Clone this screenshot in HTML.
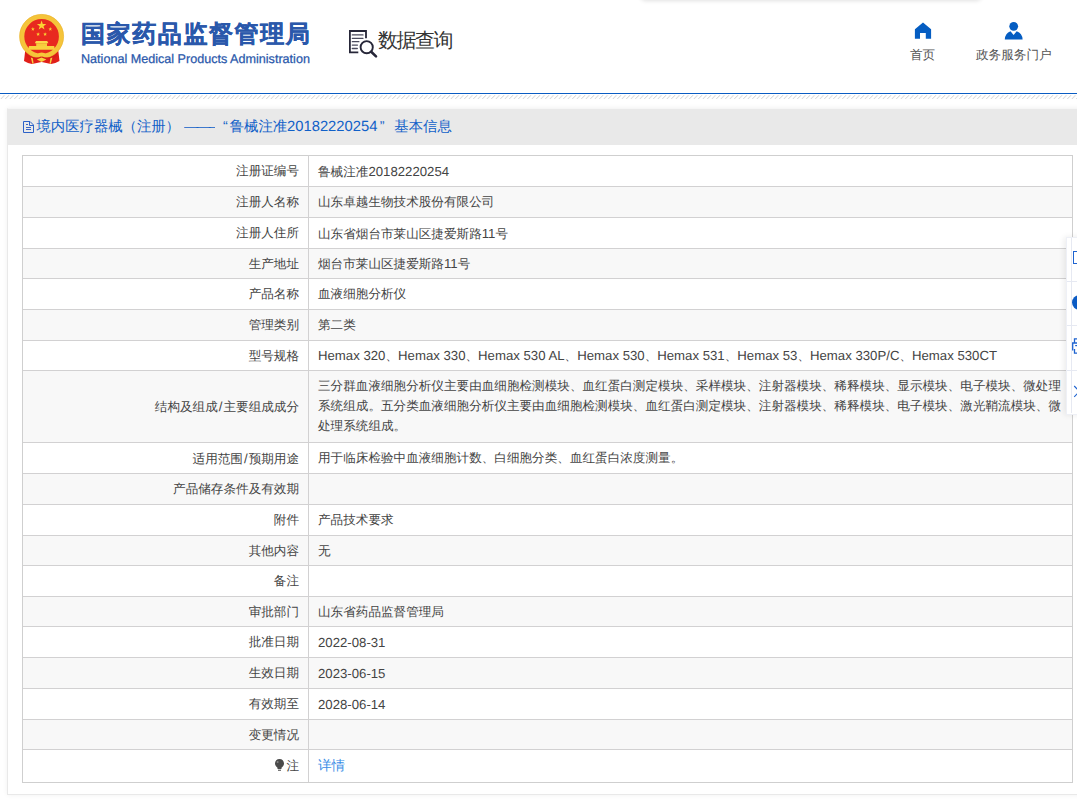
<!DOCTYPE html>
<html><head><meta charset="utf-8">
<style>
*{margin:0;padding:0;box-sizing:border-box}
html,body{width:1077px;height:801px;overflow:hidden;background:#fff}
body{position:relative;font-family:"Liberation Sans",sans-serif;color:#444;text-rendering:geometricPrecision}
.la{font-size:13.2px}
.abs{position:absolute}
.lbl{position:absolute;left:22px;width:277px;text-align:right;font-size:12.6px;white-space:nowrap;color:#444}
.val{position:absolute;left:318px;font-size:12.6px;white-space:nowrap;color:#444}
.hl{position:absolute;left:22px;width:1050px;height:1px;background:#d2d1d2}
.bg{position:absolute;left:23px;width:1049px;background:#f8f8f8}
</style></head><body>

<div class="abs" style="left:640px;top:-20px;width:342px;height:20px;background:#fff;border-radius:0 0 6px 6px;box-shadow:0 1px 4px rgba(0,0,0,0.12)"></div>
<svg class="abs" style="left:14px;top:10px" width="56" height="56" viewBox="14 10 56 56">
<path d="M25.5 48 L24 61 Q28 63.5 32 64 L41.6 62 L51 64 Q55.5 63.5 59.5 61 L58 48 Z" fill="#e11f1a"/>
<circle cx="41.6" cy="36.4" r="19.7" fill="#e8291f" stroke="#f5c43a" stroke-width="4.8"/>
<circle cx="41.6" cy="36.4" r="22" fill="none" stroke="#e9b22a" stroke-width="0.6"/>
<polygon fill="#fad233" points="41.6,20.6 42.8,24 46.3,24.1 43.5,26.2 44.5,29.6 41.6,27.6 38.7,29.6 39.7,26.2 36.9,24.1 40.4,24"/>
<polygon fill="#fad233" points="32.9,27.1 33.4,28.4 34.8,28.5 33.7,29.3 34.1,30.7 32.9,29.9 31.7,30.7 32.1,29.3 31,28.5 32.4,28.4"/>
<polygon fill="#fad233" points="50.3,27.1 50.8,28.4 52.2,28.5 51.1,29.3 51.5,30.7 50.3,29.9 49.1,30.7 49.5,29.3 48.4,28.5 49.8,28.4"/>
<polygon fill="#fad233" points="38.1,32.3 38.6,33.6 40,33.7 38.9,34.5 39.3,35.9 38.1,35.1 36.9,35.9 37.3,34.5 36.2,33.7 37.6,33.6"/>
<polygon fill="#fad233" points="45.1,32.3 45.6,33.6 47,33.7 45.9,34.5 46.3,35.9 45.1,35.1 43.9,35.9 44.3,34.5 43.2,33.7 44.6,33.6"/>
<path d="M36 40.9 H47.2 L48.4 43.2 H34.8 Z" fill="#fbd948"/>
<rect x="36.2" y="43.2" width="10.8" height="2.8" fill="#f7cd3c"/>
<path d="M29 46 H54.2 L54.8 49.8 H28.4 Z" fill="#f9d23e"/>
<path d="M26.5 53.5 Q34 60 41.6 56.2 Q49 60 56.7 53.5 L58 55.5 Q50 62 41.6 58.6 Q33 62 25.2 55.5 Z" fill="#d81d18"/>
<path d="M36.5 54.5 Q41.6 50.5 46.7 54.5 L41.6 56.5 Z" fill="#f6c83a"/>
<path d="M36.8 59.5 L41.6 57.6 L46.4 59.5 L41.6 62 Z" fill="#f8d040"/>
<path d="M30.8 57.5 L32.8 58.2 L33.6 63.6 L32.4 63.8 Z" fill="#f8d040"/>
<path d="M52.4 57.5 L50.4 58.2 L49.6 63.6 L50.8 63.8 Z" fill="#f8d040"/>
</svg>
<div class="abs" style="left:81px;top:15px;font-size:24px;letter-spacing:1.6px;font-weight:900;color:#2a58ab;-webkit-text-stroke:0.35px #2a58ab;white-space:nowrap;line-height:40px">国家药品监督管理局</div>
<div class="abs" style="left:81px;top:51px;font-size:12.6px;color:#2a58ab;-webkit-text-stroke:0.25px #2a58ab;white-space:nowrap;line-height:16px">National Medical Products Administration</div>
<svg class="abs" style="left:346px;top:27px" width="34" height="32" viewBox="346 27 34 32">
<path d="M366 38.2 V31 H349.9 V52.3 H358.3" fill="none" stroke="#262638" stroke-width="1.8"/>
<path d="M352.3 34.9 H363 M352.3 38.3 H363 M352.3 41.7 H358.9 M352.3 45.1 H357.5 M352.3 48.5 H357.3" stroke="#4a4a5c" stroke-width="1.3" stroke-linecap="round"/>
<circle cx="366.7" cy="47.2" r="6.1" fill="#fff" stroke="#262638" stroke-width="1.9"/>
<path d="M371.2 51.8 L376 56.4" stroke="#262638" stroke-width="2.6" stroke-linecap="round"/>
</svg>
<div class="abs" style="left:378px;top:26px;font-size:20px;color:#333;white-space:nowrap;line-height:30px;letter-spacing:-1.5px">数据查询</div>
<svg class="abs" style="left:912px;top:20px" width="22" height="22" viewBox="912 20 22 22">
<path d="M923 22.6 L931.1 29.2 V38.8 H925.8 V33.1 H920 V38.8 H914.9 V29.2 Z" fill="#055dc2"/>
</svg>
<svg class="abs" style="left:1002px;top:20px" width="24" height="22" viewBox="1002 20 24 22">
<circle cx="1013.7" cy="26.3" r="4.4" fill="#055dc2"/>
<path d="M1004.8 39.4 Q1005.2 33 1010.5 31.2 L1013.6 35 L1016.7 31.2 Q1022.2 33 1022.6 39.4 Z" fill="#055dc2"/>
</svg>
<div class="abs" style="left:910px;top:46px;font-size:12.6px;color:#555;white-space:nowrap;line-height:18px">首页</div>
<div class="abs" style="left:976px;top:46px;font-size:12.6px;color:#555;white-space:nowrap;line-height:18px">政务服务门户</div>
<div class="abs" style="left:0;top:93px;width:1077px;height:1px;background:#0a5cc2"></div>
<svg class="abs" style="left:0;top:95px" width="1077" height="4"><defs><pattern id="hp" width="4.5" height="4" patternUnits="userSpaceOnUse" x="0.8" y="0"><path d="M0 4 L4 0" stroke="#cbcbcb" stroke-width="0.9"/></pattern></defs><rect width="1077" height="4" fill="url(#hp)"/></svg>
<div class="abs" style="left:7px;top:108px;width:1100px;height:687px;border:1px solid #e9e9e9;border-top-color:#f6f6f6;box-shadow:0 0 5px rgba(0,0,0,0.06);background:#fff"></div>
<div class="abs" style="left:7px;top:109px;width:1070px;height:36px;background:#e9e9e9"></div>
<svg class="abs" style="left:22px;top:119px" width="14" height="15" viewBox="22 119 14 15">
<path d="M23.5 121.5 H30 L33.5 125 V132.5 H23.5 Z" fill="none" stroke="#2d62c8" stroke-width="1"/>
<path d="M29.5 121.5 V125.5 H33.5" fill="none" stroke="#2d62c8" stroke-width="1"/>
<path d="M26 124.5 H28 M26 127.5 H31 M26 129.5 H31" stroke="#3b66c4" stroke-width="1"/>
</svg>
<div class="abs" style="left:36.5px;top:117px;font-size:14.35px;color:#1060c8;white-space:nowrap;line-height:20px">境内医疗器械（注册） <span style="display:inline-block;width:31.4px;overflow:hidden;white-space:nowrap;letter-spacing:-2px;vertical-align:top">———</span><span style="display:inline-block;width:14.4px;text-align:right;padding-right:2px">“</span>鲁械注准<span style="font-size:14.75px">20182220254</span><span style="display:inline-block;width:17px;text-align:left;padding-left:2.5px">”</span>基本信息</div>
<div class="bg" style="top:187.00px;height:30.00px"></div>
<div class="bg" style="top:249.00px;height:29.00px"></div>
<div class="bg" style="top:310.00px;height:30.00px"></div>
<div class="bg" style="top:371.00px;height:71.00px"></div>
<div class="bg" style="top:474.00px;height:30.00px"></div>
<div class="bg" style="top:536.00px;height:29.00px"></div>
<div class="bg" style="top:597.00px;height:29.00px"></div>
<div class="bg" style="top:658.00px;height:30.00px"></div>
<div class="bg" style="top:720.00px;height:29.00px"></div>
<div class="lbl" style="top:155.50px;line-height:31.00px">注册证编号</div>
<div class="val" style="top:155.50px;line-height:31.00px">鲁械注准<span class="la">20182220254</span></div>
<div class="hl" style="top:186px"></div>
<div class="lbl" style="top:186.50px;line-height:31.00px">注册人名称</div>
<div class="val" style="top:186.50px;line-height:31.00px">山东卓越生物技术股份有限公司</div>
<div class="hl" style="top:217px"></div>
<div class="lbl" style="top:217.50px;line-height:31.00px">注册人住所</div>
<div class="val" style="top:217.50px;line-height:31.00px">山东省烟台市莱山区捷爱斯路<span class="la">11</span>号</div>
<div class="hl" style="top:248px"></div>
<div class="lbl" style="top:248.50px;line-height:30.00px">生产地址</div>
<div class="val" style="top:248.50px;line-height:30.00px">烟台市莱山区捷爱斯路<span class="la">11</span>号</div>
<div class="hl" style="top:278px"></div>
<div class="lbl" style="top:278.50px;line-height:31.00px">产品名称</div>
<div class="val" style="top:278.50px;line-height:31.00px">血液细胞分析仪</div>
<div class="hl" style="top:309px"></div>
<div class="lbl" style="top:309.50px;line-height:31.00px">管理类别</div>
<div class="val" style="top:309.50px;line-height:31.00px">第二类</div>
<div class="hl" style="top:340px"></div>
<div class="lbl" style="top:340.50px;line-height:30.00px">型号规格</div>
<div class="val" style="top:340.50px;line-height:30.00px"><span class="la">Hemax 320</span>、<span class="la">Hemax 330</span>、<span class="la">Hemax 530 AL</span>、<span class="la">Hemax 530</span>、<span class="la">Hemax 531</span>、<span class="la">Hemax 53</span>、<span class="la">Hemax 330P/C</span>、<span class="la">Hemax 530CT</span></div>
<div class="hl" style="top:370px"></div>
<div class="lbl" style="top:370.50px;line-height:72.00px">结构及组成<span class="la" style="padding:0 1px">/</span>主要组成成分</div>
<div class="val" style="top:370.50px;line-height:20.1px;padding-top:5px">三分群血液细胞分析仪主要由血细胞检测模块、血红蛋白测定模块、采样模块、注射器模块、稀释模块、显示模块、电子模块、微处理<br>系统组成。五分类血液细胞分析仪主要由血细胞检测模块、血红蛋白测定模块、注射器模块、稀释模块、电子模块、激光鞘流模块、微<br>处理系统组成。</div>
<div class="hl" style="top:442px"></div>
<div class="lbl" style="top:442.50px;line-height:31.00px">适用范围<span class="la" style="padding:0 1px">/</span>预期用途</div>
<div class="val" style="top:442.50px;line-height:31.00px">用于临床检验中血液细胞计数、白细胞分类、血红蛋白浓度测量。</div>
<div class="hl" style="top:473px"></div>
<div class="lbl" style="top:473.50px;line-height:31.00px">产品储存条件及有效期</div>
<div class="hl" style="top:504px"></div>
<div class="lbl" style="top:504.50px;line-height:31.00px">附件</div>
<div class="val" style="top:504.50px;line-height:31.00px">产品技术要求</div>
<div class="hl" style="top:535px"></div>
<div class="lbl" style="top:535.50px;line-height:30.00px">其他内容</div>
<div class="val" style="top:535.50px;line-height:30.00px">无</div>
<div class="hl" style="top:565px"></div>
<div class="lbl" style="top:565.50px;line-height:31.00px">备注</div>
<div class="hl" style="top:596px"></div>
<div class="lbl" style="top:596.50px;line-height:30.00px">审批部门</div>
<div class="val" style="top:596.50px;line-height:30.00px">山东省药品监督管理局</div>
<div class="hl" style="top:626px"></div>
<div class="lbl" style="top:626.50px;line-height:31.00px">批准日期</div>
<div class="val" style="top:626.50px;line-height:31.00px"><span class="la">2022-08-31</span></div>
<div class="hl" style="top:657px"></div>
<div class="lbl" style="top:657.50px;line-height:31.00px">生效日期</div>
<div class="val" style="top:657.50px;line-height:31.00px"><span class="la">2023-06-15</span></div>
<div class="hl" style="top:688px"></div>
<div class="lbl" style="top:688.50px;line-height:31.00px">有效期至</div>
<div class="val" style="top:688.50px;line-height:31.00px"><span class="la">2028-06-14</span></div>
<div class="hl" style="top:719px"></div>
<div class="lbl" style="top:719.50px;line-height:30.00px">变更情况</div>
<div class="hl" style="top:749px"></div>
<div class="lbl" style="top:749.50px;line-height:33.00px">注</div>
<svg class="abs" style="left:274px;top:758px" width="11" height="14" viewBox="274 758 11 14"><path d="M279.5 759 C276.8 759 275 761 275 763.5 C275 765.6 276.5 766.6 277.5 767.8 V769 H281.5 V767.8 C282.5 766.6 284 765.6 284 763.5 C284 761 282.2 759 279.5 759 Z" fill="#4a4a4a"/><rect x="278" y="769.6" width="3" height="1.4" fill="#777"/><circle cx="277.6" cy="762" r="1" fill="#888"/></svg>
<div class="val" style="top:749.00px;line-height:33.00px;color:#3a8ee6;font-size:13.6px">详情</div>
<div class="abs" style="left:22px;top:155px;width:1051px;height:628px;border:1px solid #cfcfcf"></div>
<div class="abs" style="left:308px;top:155px;width:1px;height:627px;background:#d2d1d2"></div>
<div class="abs" style="left:1066px;top:237px;width:40px;height:178px;background:#fff;border:1px solid #eef0f6;box-shadow:-2px 0 6px rgba(0,0,0,0.08)"></div>
<div class="abs" style="left:1071px;top:238px;width:1px;height:175px;background:#e6e9f2"></div>
<div class="abs" style="left:1067px;top:281px;width:10px;height:1px;background:#e6e9f2"></div>
<div class="abs" style="left:1067px;top:325px;width:10px;height:1px;background:#e6e9f2"></div>
<div class="abs" style="left:1067px;top:370px;width:10px;height:1px;background:#e6e9f2"></div>
<div class="abs" style="left:1073px;top:251px;width:8px;height:13px;border:1.5px solid #1e63d0"></div>
<div class="abs" style="left:1072px;top:295px;width:15px;height:15px;border-radius:50%;background:#0b5bc4"></div>
<svg class="abs" style="left:1070px;top:336px" width="7" height="20" viewBox="1070 336 7 20"><path d="M1074.5 343 V338.8 H1078 M1072.7 350.5 V343 H1078 M1074.5 349 V353.2 H1078" fill="none" stroke="#1e63d0" stroke-width="1.3"/><rect x="1075.2" y="345" width="2" height="1.2" fill="#1e63d0"/></svg>
<svg class="abs" style="left:1073px;top:384px" width="4" height="14" viewBox="1073 384 4 14"><path d="M1074.2 386 L1079.5 391.4 L1074.2 396.8" fill="none" stroke="#1e63d0" stroke-width="1.1"/></svg>
</body></html>
